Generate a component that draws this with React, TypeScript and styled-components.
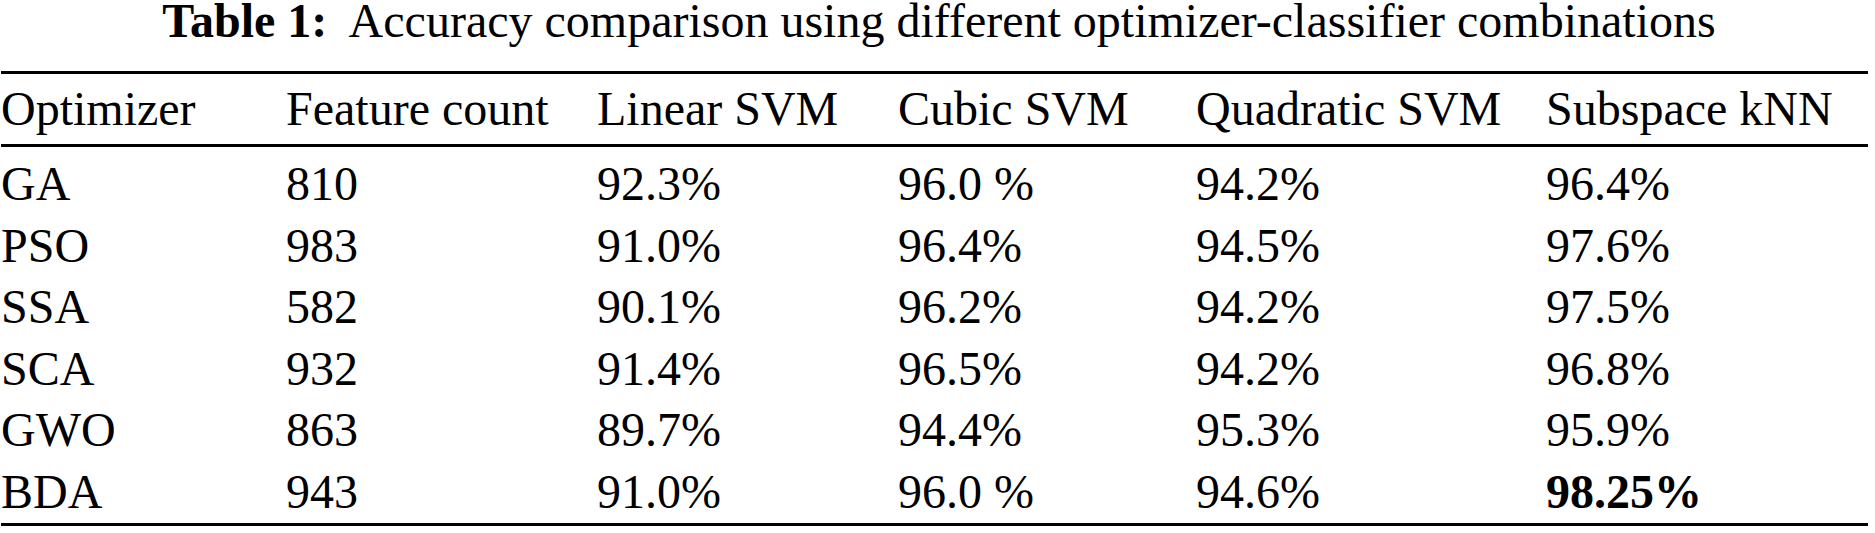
import React from "react";
import styled, { createGlobalStyle } from "styled-components";

const Global = createGlobalStyle`
  html, body {
    margin: 0;
    padding: 0;
    background: #ffffff;
  }
  body {
    font-family: "Liberation Serif", "Times New Roman", serif;
    color: #000000;
  }
`;

const Page = styled.div`
  width: 1875px;
  padding: 0 7px 0 1px;
  box-sizing: border-box;
`;

const Caption = styled.div`
  font-size: 48px;
  line-height: 42px;
  text-align: center;
  white-space: pre;
  margin: 0 0 29px 0;
  padding-left: 9px;
`;

const CaptionLabel = styled.span`
  font-weight: bold;
`;

const Table = styled.div`
  border-top: 3px solid #000;
  border-bottom: 3px solid #000;
`;

const Body = styled.div`
  padding-bottom: 6.4px;
`;

const Row = styled.div<{ $header?: boolean }>`
  display: grid;
  grid-template-columns: 285px 311px 301px 298px 350px 1fr;
  font-size: 48px;
  line-height: 48px;
  white-space: pre;
  padding-top: ${(p) => (p.$header ? "11px" : "13px")};
  height: ${(p) => (p.$header ? "73px" : "61.6px")};
  box-sizing: border-box;
  border-bottom: ${(p) => (p.$header ? "3px solid #000" : "none")};
`;

const Cell = styled.div<{ $bold?: boolean }>`
  font-weight: ${(p) => (p.$bold ? "bold" : "normal")};
`;

const headers = [
  "Optimizer",
  "Feature count",
  "Linear SVM",
  "Cubic SVM",
  "Quadratic SVM",
  "Subspace kNN",
];

const rows: string[][] = [
  ["GA", "810", "92.3%", "96.0 %", "94.2%", "96.4%"],
  ["PSO", "983", "91.0%", "96.4%", "94.5%", "97.6%"],
  ["SSA", "582", "90.1%", "96.2%", "94.2%", "97.5%"],
  ["SCA", "932", "91.4%", "96.5%", "94.2%", "96.8%"],
  ["GWO", "863", "89.7%", "94.4%", "95.3%", "95.9%"],
  ["BDA", "943", "91.0%", "96.0 %", "94.6%", "98.25%"],
];

export default function App() {
  return (
    <>
      <Global />
      <Page>
        <Caption>
          <CaptionLabel>Table 1:</CaptionLabel>
          {"  Accuracy comparison using different optimizer-classifier combinations"}
        </Caption>
        <Table>
          <Row $header>
            {headers.map((h) => (
              <Cell key={h}>{h}</Cell>
            ))}
          </Row>
          <Body>
            {rows.map((r) => (
              <Row key={r[0]}>
                {r.map((c, i) => (
                  <Cell key={i} $bold={r[0] === "BDA" && i === 5}>
                    {c}
                  </Cell>
                ))}
              </Row>
            ))}
          </Body>
        </Table>
      </Page>
    </>
  );
}
